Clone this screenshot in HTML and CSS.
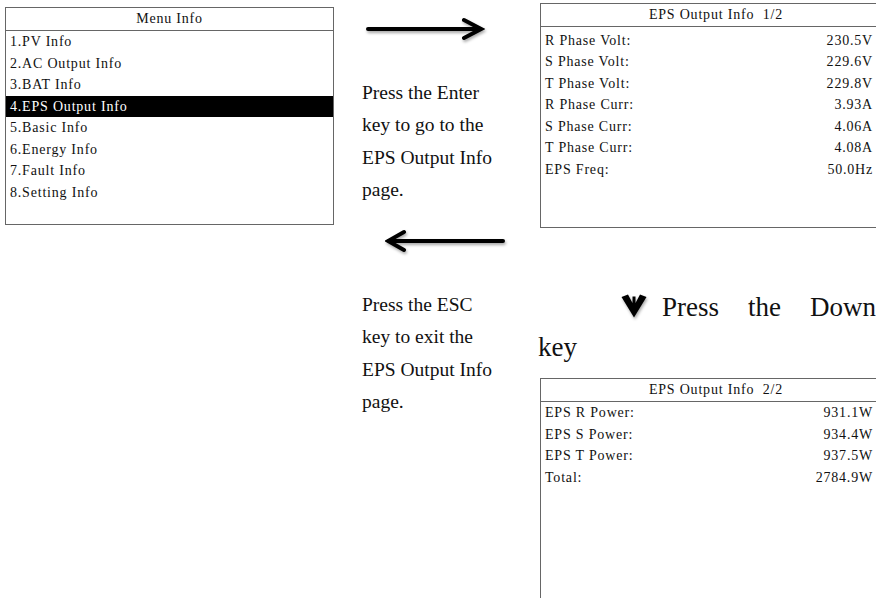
FILE: index.html
```html
<!DOCTYPE html>
<html lang="en">
<head>
<meta charset="utf-8">
<title>EPS Output Info</title>
<link rel="stylesheet" href="styles.css">
</head>
<body>
<div class="page">
  <div class="col col-menu">
    <div class="lcd menu">
      <div class="lcd-head">Menu Info</div>
      <ul class="lcd-body">
        <li class="row">1.PV Info</li>
        <li class="row">2.AC Output Info</li>
        <li class="row">3.BAT Info</li>
        <li class="row sel">4.EPS Output Info</li>
        <li class="row">5.Basic Info</li>
        <li class="row">6.Energy Info</li>
        <li class="row">7.Fault Info</li>
        <li class="row">8.Setting Info</li>
      </ul>
    </div>
  </div>

  <div class="col col-mid">
    <svg class="arrow arrow-right" width="120" height="24" viewBox="0 0 120 24">
      <line x1="3" y1="12" x2="115" y2="12" stroke="#000" stroke-width="4" stroke-linecap="round"/>
      <polyline points="99,3 116,12 99,21" fill="none" stroke="#000" stroke-width="4" stroke-linecap="round" stroke-linejoin="miter"/>
    </svg>
    <p class="note">Press the Enter<br>key to go to the<br>EPS Output Info<br>page.</p>
    <svg class="arrow arrow-left" width="122" height="24" viewBox="0 0 122 24">
      <line x1="4" y1="12" x2="118" y2="12" stroke="#000" stroke-width="4" stroke-linecap="round"/>
      <polyline points="19,3 3,12 19,21" fill="none" stroke="#000" stroke-width="4" stroke-linecap="round" stroke-linejoin="miter"/>
    </svg>
    <p class="note note-esc">Press the ESC<br>key to exit the<br>EPS Output Info<br>page.</p>
  </div>

  <div class="col col-right">
    <div class="lcd panel panel-one">
      <div class="lcd-head panel-head">EPS Output Info  1/2</div>
      <ul class="lcd-body panel-body">
        <li class="row"><span>R Phase Volt:</span><span>230.5V</span></li>
        <li class="row"><span>S Phase Volt:</span><span>229.6V</span></li>
        <li class="row"><span>T Phase Volt:</span><span>229.8V</span></li>
        <li class="row"><span>R Phase Curr:</span><span>3.93A</span></li>
        <li class="row"><span>S Phase Curr:</span><span>4.06A</span></li>
        <li class="row"><span>T Phase Curr:</span><span>4.08A</span></li>
        <li class="row"><span>EPS Freq:</span><span>50.0Hz</span></li>
      </ul>
    </div>

    <p class="down-note"><svg class="down-icon" width="26" height="25" viewBox="0 0 26 25"><path d="M0.5,3 L7,0.5 L11.5,9 L11.5,2.5 L14.5,2.5 L14.5,9 L19,0.5 L25.5,3 L13,23.5 Z" fill="#000"/></svg>Press the Down key</p>

    <div class="lcd panel panel-two">
      <div class="lcd-head panel-head">EPS Output Info  2/2</div>
      <ul class="lcd-body">
        <li class="row"><span>EPS R Power:</span><span>931.1W</span></li>
        <li class="row"><span>EPS S Power:</span><span>934.4W</span></li>
        <li class="row"><span>EPS T Power:</span><span>937.5W</span></li>
        <li class="row"><span>Total:</span><span>2784.9W</span></li>
      </ul>
    </div>
  </div>
</div>
</body>
</html>
```

FILE: styles.css
```css
html, body {
  margin: 0;
  padding: 0;
  background: #fff;
  overflow: hidden;
}

.page {
  display: flex;
  align-items: flex-start;
  width: 876px;
  height: 598px;
  overflow: hidden;
}

.col {
  flex: 0 0 auto;
}

.col-menu {
  width: 329px;
  margin-left: 5px;
  margin-top: 7px;
}

.col-mid {
  width: 204px;
  display: flex;
  flex-direction: column;
  align-items: flex-start;
}

.col-right {
  width: 338px;
  display: flex;
  flex-direction: column;
  align-items: flex-start;
}

/* LCD style panels */
.lcd {
  box-sizing: border-box;
  border: 1px solid #666;
  background: #fff;
  font-family: "Liberation Serif", "Times New Roman", serif;
  font-size: 14px;
  letter-spacing: 0.8px;
  color: #111;
}

.lcd-head {
  height: 22px;
  line-height: 22px;
  text-align: center;
  border-bottom: 1px solid #666;
  white-space: pre;
}

.lcd-body {
  list-style: none;
  margin: 0;
  padding: 0;
}

.row {
  height: 21.5px;
  line-height: 21.5px;
  padding: 0 4px;
  display: flex;
  justify-content: space-between;
  white-space: pre;
}

.row.sel {
  background: #000;
  color: #fff;
}

.menu {
  width: 329px;
  height: 218px;
}

.panel {
  width: 338px;
  margin-left: 2px;
}

.panel-head {
  padding-left: 14px;
}

.panel-one {
  margin-top: 3px;
  height: 225px;
}

.panel-body {
  padding-top: 2.5px;
}

.panel-two {
  margin-top: 11px;
  height: 240px;
}

/* arrows & notes */
.arrow {
  display: block;
  filter: drop-shadow(1px 2px 1.5px rgba(0, 0, 0, 0.35));
}

.arrow-right {
  margin-top: 17px;
  margin-left: 31px;
}

.arrow-left {
  margin-top: 23px;
  margin-left: 51px;
}

.note {
  margin: 36px 0 0 28px;
  font-family: "Liberation Serif", "Times New Roman", serif;
  font-size: 19.5px;
  line-height: 32.3px;
  color: #111;
}

.down-note {
  box-sizing: border-box;
  width: 338px;
  margin: 59px 0 0 0;
  font-family: "Liberation Serif", "Times New Roman", serif;
  font-size: 27px;
  line-height: 40px;
  color: #111;
  text-align: justify;
  text-indent: 83px;
}

.down-icon {
  vertical-align: -3px;
  margin-right: 15px;
  filter: drop-shadow(1px 2px 1.5px rgba(0, 0, 0, 0.35));
}
```
